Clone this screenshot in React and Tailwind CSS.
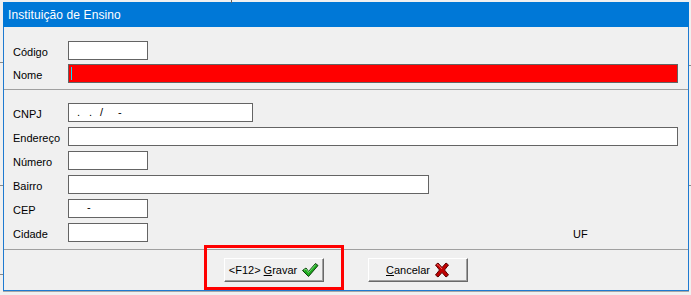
import React from 'react';

const font = { fontFamily: '"Liberation Sans", Arial, sans-serif' };

function CheckIcon() {
  return (
    <svg width="18" height="16" viewBox="0 0 18 16">
      <path d="M1.5 8.5 L5 6 L7.5 9.5 L14.5 1.5 L17 3.5 L7.5 14.5 Z" fill="#1faa1f" stroke="#0b3d0b" strokeWidth="1" strokeLinejoin="round" />
      <path d="M3 8.3 L5 7 L7.5 10.5 L14.6 2.6" fill="none" stroke="#7be07b" strokeWidth="1" />
    </svg>
  );
}

function CrossIcon() {
  return (
    <svg width="16" height="16" viewBox="0 0 16 16">
      <path d="M1.5 3 L4 1 L8 5.5 L12 1 L14.5 3 L10.5 8 L14.5 13 L12 15 L8 10.5 L4 15 L1.5 13 L5.5 8 Z" fill="#c00000" stroke="#5a0000" strokeWidth="1" strokeLinejoin="round" />
      <path d="M3 3.2 L4 2.5 L8 7" fill="none" stroke="#ff6060" strokeWidth="1" />
    </svg>
  );
}

function Field({ label, width, children, red, right }) {
  return (
    <div className="flex items-start h-[19px]">
      <span className="w-[64px] shrink-0 pl-[9px] pt-[5px] text-[11px] leading-[13px] text-black">{label}</span>
      <div
        className={`h-[19px] shrink-0 border border-[#646464] ${red ? 'bg-[#ff0000]' : 'bg-white'} relative text-[11px] leading-[17px] text-black`}
        style={{ width }}
      >
        {children}
      </div>
      {right}
    </div>
  );
}

function Button({ children }) {
  return (
    <button
      type="button"
      className="w-[100px] h-[24px] flex items-center justify-center gap-[4px] bg-[#f0f0f0] border border-t-white border-l-white border-r-[#696969] border-b-[#696969] shadow-[inset_-1px_-1px_0_#a0a0a0] text-[11px] text-black"
    >
      {children}
    </button>
  );
}

export default function App() {
  return (
    <div className="relative w-[691px] h-[295px] bg-[#f0f0f0] overflow-hidden" style={font}>
      {/* background window bits */}
      <div className="absolute left-[231px] top-0 w-px h-[3px] bg-[#646464]" />
      <div className="absolute left-0 top-[274px] w-[3px] h-px bg-[#8a8a8a]" />
      <div className="absolute left-0 top-[62px] w-[3px] h-px bg-[#8a8a8a]" />
      <div className="absolute left-0 top-[185px] w-[3px] h-px bg-[#8a8a8a]" />
      <div className="absolute right-0 top-[65px] w-[2px] h-px bg-[#8a8a8a]" />
      <div className="absolute right-0 top-[185px] w-[2px] h-px bg-[#8a8a8a]" />

      <div className="ml-[3px] mt-[2px] w-[686px] h-[289px] flex flex-col border-x border-b border-[#1e7ad0] bg-[#f0f0f0] shadow-[0_1px_0_#a8a8a8]">
        <div className="h-[25px] -mx-px bg-[#0078d7] flex items-center pl-[5px] text-[12px] tracking-[0.1px] text-white">
          Instituição de Ensino
        </div>

        <div className="flex flex-col gap-[4px] pt-[14px]">
          <Field label="Código" width={80} />
          <Field label="Nome" width={610} red>
            <span className="absolute left-[2px] top-[2px] w-px h-[13px] bg-[#00e5ff]" />
          </Field>
        </div>

        <div className="mt-[6px] h-px bg-[#a0a0a0]" />

        <div className="flex flex-col gap-[5px] pt-[13px]">
          <Field label="CNPJ" width={185}>
            <span className="absolute left-[8px] top-0">.</span>
            <span className="absolute left-[20px] top-0">.</span>
            <span className="absolute left-[31px] top-0">/</span>
            <span className="absolute left-[49px] top-0">-</span>
          </Field>
          <Field label="Endereço" width={610} />
          <Field label="Número" width={80} />
          <Field label="Bairro" width={361} />
          <Field label="CEP" width={80}>
            <span className="absolute left-[18px] top-[-1px]">-</span>
          </Field>
          <Field
            label="Cidade"
            width={80}
            right={<span className="ml-[425px] pt-[5px] text-[11px] leading-[13px] text-black">UF</span>}
          />
        </div>

        <div className="mt-[7px] h-px bg-[#a0a0a0]" />

        <div className="flex gap-[44px] pl-[220px] pt-[8px]">
          <Button>
            <span>&lt;F12&gt; <u>G</u>ravar</span>
            <CheckIcon />
          </Button>
          <Button>
            <span><u>C</u>ancelar</span>
            <CrossIcon />
          </Button>
        </div>
      </div>

      {/* highlight annotation */}
      <div className="absolute left-[204px] top-[245px] w-[140px] h-[45px] border-[3px] border-[#ff0000]" />
    </div>
  );
}
